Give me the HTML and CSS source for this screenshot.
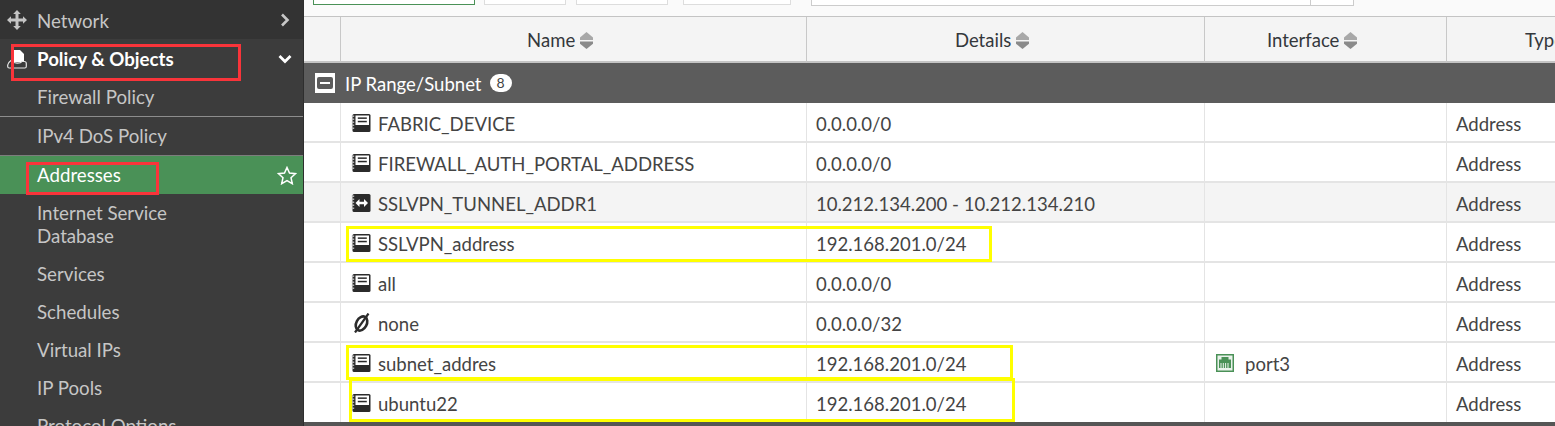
FILE: index.html
```html
<!DOCTYPE html>
<html lang="en">
<head>
<meta charset="utf-8">
<title>Addresses</title>
<link rel="stylesheet" href="styles.css">
</head>
<body>
<svg class="defs" width="0" height="0">
  <symbol id="book" viewBox="0 0 20 20">
    <rect x="1.500" y="1" width="18" height="18" rx="1.500" fill="#2b2b2b"/>
    <rect x="4.500" y="2.500" width="13.500" height="9.500" fill="#fff"/>
    <rect x="6.800" y="4.400" width="9" height="1.500" fill="#2b2b2b"/>
    <rect x="6.800" y="7.800" width="9" height="1.500" fill="#2b2b2b"/>
    <path d="M2 2.500v15" stroke="#b4b4b4" stroke-width="2.400" stroke-dasharray="1.500 1.500"/>
  </symbol>
  <symbol id="range" viewBox="0 0 20 20">
    <rect x="1.500" y="1" width="18" height="18" rx="1.500" fill="#2b2b2b"/>
    <path d="M4.500 10l4-4v2.700h4.500v-2.700l4 4-4 4v-2.700h-4.500v2.700z" fill="#fff"/>
    <path d="M2 2.500v15" stroke="#b4b4b4" stroke-width="2.400" stroke-dasharray="1.500 1.500"/>
  </symbol>
  <symbol id="sort" viewBox="0 0 13 17">
    <path d="M6.500 0l6.500 5.500v2.500h-13v-2.500z" fill="#a8a8a8"/>
    <path d="M0 9.500h13v2.300l-6.500 5.200-6.500-5.200z" fill="#8a8a8a"/>
  </symbol>
</svg>

<div class="app">
  <nav class="sidebar">
    <div class="nav-item nav-top">
      <svg class="nav-icon" width="20" height="20" viewBox="0 0 20 20"><path d="M10 0l3.800 4h-2.300v4.500h4.500v-2.300l4 3.800-4 3.800v-2.300h-4.500v4.500h2.300l-3.800 4-3.800-4h2.300v-4.500h-4.500v2.300l-4-3.800 4-3.800v2.300h4.500v-4.500h-2.300z" fill="#c4c4c4"/></svg>
      <span>Network</span>
      <svg class="chev" width="10" height="14" viewBox="0 0 10 14"><path d="M2 1.500l5.500 5.500-5.500 5.500" fill="none" stroke="#c8c8c8" stroke-width="2.600"/></svg>
    </div>
    <div class="nav-item nav-open">
      <svg class="nav-icon" width="20" height="20" viewBox="0 0 20 20"><path d="M6 1h7l4 4v8h-11z" fill="#fff"/><path d="M4 11.500c-1.500 1-3 2.500-3.300 4.500v1.500a1.500 1.500 0 0 0 1.500 1.500h15.600a1.500 1.500 0 0 0 1.500-1.500v-3a2 2 0 0 0-2-2h-2.500c-1 2-8 2.500-10.800-1z" fill="#3b3b3b" stroke="#e6e6e6" stroke-width="1.200"/></svg>
      <span>Policy &amp; Objects</span>
      <svg class="chev chev-down" width="14" height="10" viewBox="0 0 14 10"><path d="M1.500 2l5.500 5.500 5.500-5.500" fill="none" stroke="#fff" stroke-width="2.800"/></svg>
    </div>
    <div class="nav-sub nav-line">Firewall Policy</div>
    <div class="nav-sub">IPv4 DoS Policy</div>
    <div class="nav-sub nav-active">
      <span>Addresses</span>
      <svg class="star" width="20" height="19" viewBox="0 0 20 19"><path d="M10 1.500l2.500 5.600 6 .6-4.500 4 1.300 6-5.300-3.100-5.300 3.100 1.300-6-4.500-4 6-.6z" fill="none" stroke="#fff" stroke-width="1.500"/></svg>
    </div>
    <div class="nav-sub nav-wrap">Internet Service<br>Database</div>
    <div class="nav-sub">Services</div>
    <div class="nav-sub">Schedules</div>
    <div class="nav-sub">Virtual IPs</div>
    <div class="nav-sub">IP Pools</div>
    <div class="nav-sub">Protocol Options</div>
  </nav>

  <main class="main">
    <div class="toolbar">
      <div class="tool tool-create"></div>
      <div class="tool tool-a"></div>
      <div class="tool tool-b"></div>
      <div class="tool tool-c"></div>
      <div class="tool-search"><div class="search-end"></div></div>
    </div>

    <table class="grid">
      <colgroup>
        <col class="c-check"><col class="c-name"><col class="c-details"><col class="c-iface"><col class="c-type">
      </colgroup>
      <thead>
        <tr>
          <th></th>
          <th>Name <svg class="sort" width="13" height="17"><use href="#sort"/></svg></th>
          <th>Details <svg class="sort" width="13" height="17"><use href="#sort"/></svg></th>
          <th>Interface <svg class="sort" width="13" height="17"><use href="#sort"/></svg></th>
          <th>Type</th>
        </tr>
      </thead>
      <tbody>
        <tr class="group">
          <td colspan="5">
            <div class="group-label">
              <span class="minus"><i></i></span>
              <span>IP Range/Subnet</span>
              <span class="count">8</span>
            </div>
          </td>
        </tr>
        <tr>
          <td></td>
          <td><div class="cell"><svg class="ico" width="20" height="20"><use href="#book"/></svg>FABRIC_DEVICE</div></td>
          <td>0.0.0.0/0</td><td></td><td>Address</td>
        </tr>
        <tr>
          <td></td>
          <td><div class="cell"><svg class="ico" width="20" height="20"><use href="#book"/></svg>FIREWALL_AUTH_PORTAL_ADDRESS</div></td>
          <td>0.0.0.0/0</td><td></td><td>Address</td>
        </tr>
        <tr class="row-grey">
          <td></td>
          <td><div class="cell"><svg class="ico" width="20" height="20"><use href="#range"/></svg>SSLVPN_TUNNEL_ADDR1</div></td>
          <td>10.212.134.200 - 10.212.134.210</td><td></td><td>Address</td>
        </tr>
        <tr>
          <td></td>
          <td><div class="cell"><svg class="ico" width="20" height="20"><use href="#book"/></svg>SSLVPN_address</div></td>
          <td>192.168.201.0/24</td><td></td><td>Address</td>
        </tr>
        <tr>
          <td></td>
          <td><div class="cell"><svg class="ico" width="20" height="20"><use href="#book"/></svg>all</div></td>
          <td>0.0.0.0/0</td><td></td><td>Address</td>
        </tr>
        <tr>
          <td></td>
          <td><div class="cell"><svg class="ico" width="20" height="20" viewBox="0 0 20 20"><ellipse cx="10.500" cy="10.500" rx="5.200" ry="7.500" transform="rotate(28 10.500 10.500)" fill="none" stroke="#2b2b2b" stroke-width="2.600"/><path d="M4 19.500l13.500-19" stroke="#2b2b2b" stroke-width="2.200"/></svg>none</div></td>
          <td>0.0.0.0/32</td><td></td><td>Address</td>
        </tr>
        <tr>
          <td></td>
          <td><div class="cell"><svg class="ico" width="20" height="20"><use href="#book"/></svg>subnet_addres</div></td>
          <td>192.168.201.0/24</td>
          <td><div class="cell"><svg class="ico port" width="18" height="18" viewBox="0 0 18 18"><rect width="18" height="18" fill="#4a9157"/><rect x="1.500" y="1.500" width="15" height="15" fill="#e9f2eb"/><path d="M5.500 3h7v2.500h2.500v8.500h-12v-8.500h2.500z" fill="#4a9157"/><path d="M5 9v5M7.300 9v5M9.600 9v5M12 9v5" stroke="#fff" stroke-width=".9"/></svg>port3</div></td>
          <td>Address</td>
        </tr>
        <tr>
          <td></td>
          <td><div class="cell"><svg class="ico" width="20" height="20"><use href="#book"/></svg>ubuntu22</div></td>
          <td>192.168.201.0/24</td><td></td><td>Address</td>
        </tr>
      </tbody>
    </table>
    <div class="footbar"></div>
  </main>

  <!-- annotations drawn over the screenshot -->
  <div class="mark red mark-policy"></div>
  <div class="mark red mark-addr"></div>
  <div class="mark yellow mark-y1"></div>
  <div class="mark yellow mark-y2"></div>
  <div class="mark yellow mark-y3"></div>
</div>
</body>
</html>
```

FILE: styles.css
```css
html, body {
	margin: 0;
	padding: 0;
	height: 100%;
	overflow: hidden;
	background: #fff;
}
body {
	font-family: Lato, "Liberation Sans", Arial, sans-serif;
	font-size: 18.7px;
	color: #444;
}
.defs { position: absolute; }

.app {
	position: relative;
	display: flex;
	width: 1555px;
	height: 426px;
	overflow: hidden;
}

/* left menu */
.sidebar {
	flex: 0 0 303px;
	width: 303px;
	background: #3c3c3c;
	border-right: 1px solid #2e2e2e;
	color: #c6c6c6;
	box-sizing: content-box;
}
.nav-item {
	display: flex;
	align-items: center;
	padding-left: 7px;
	padding-right: 11px;
}
.nav-top {
	height: 39px;
	background: #333;
	padding-top: 1px;
	box-sizing: border-box;
}
.nav-top span { padding-top: 2px; }
.nav-open {
	height: 39px;
	color: #fff;
	font-weight: 700;
}
.nav-open span { padding-top: 1px; }
.nav-icon { flex: none; margin-right: 10px; }
.nav-item span { flex: 1; }
.chev { flex: none; margin-right: 2px; }
.chev-down { margin-right: 0; }
.nav-sub {
	display: flex;
	align-items: center;
	height: 38px;
	box-sizing: border-box;
	padding: 0 7px 0 37px;
}
.nav-line {
	height: 39px;
	border-bottom: 1px solid #8d8d8d;
}
.nav-active {
	height: 39px;
	background: #4a9157;
	color: #fff;
	justify-content: space-between;
	border-top: 1px solid #7d7d7d;
}
.star { margin-right: -1px; }
.nav-wrap {
	height: 61px;
	line-height: 23px;
}

/* content */
.main {
	flex: 1;
	min-width: 0;
	display: flex;
	flex-direction: column;
}
.toolbar {
	display: flex;
	height: 16px;
	flex: none;
	background: #fafafa;
	border-bottom: 1px solid #c4c4c4;
	padding-left: 9px;
}
.tool {
	height: 5px;
	background: #fff;
	border: 1px solid #ddd;
	border-top: 0;
	box-sizing: border-box;
	margin-right: 10px;
}
.tool-create { width: 162px; border-color: #4a9157; margin-right: 9px; }
.tool-a { width: 82px; }
.tool-b { width: 92px; margin-right: 15px; }
.tool-c { width: 108px; margin-right: 20px; }
.tool-search {
	width: 543px;
	height: 6px;
	background: #fff;
	border: 1px solid #ccc;
	border-top: 0;
	box-sizing: border-box;
	display: flex;
	justify-content: flex-end;
}
.search-end {
	width: 42px;
	border-left: 1px solid #ccc;
}

.grid {
	table-layout: fixed;
	border-collapse: separate;
	border-spacing: 0;
	width: 1365px;
	flex: none;
	font-size: 18.55px;
}
.c-check { width: 37px; }
.c-name { width: 466px; }
.c-details { width: 398px; }
.c-iface { width: 242px; }
.c-type { width: 222px; }

.grid th {
	height: 46px;
	padding: 2px 27px 0 0;
	box-sizing: border-box;
	background: #f4f4f4;
	border-right: 1px solid #c8c8c8;
	border-bottom: 2px solid #c4c4c4;
	font-weight: 400;
	color: #34383c;
	text-align: center;
	white-space: nowrap;
	overflow: hidden;
}
.grid th:last-child { border-right: 0; }
.sort { vertical-align: -2px; }

.grid td {
	height: 40px;
	padding: 4px 0 0 9px;
	box-sizing: border-box;
	border-right: 1px solid #e4e4e4;
	border-bottom: 2px solid #e4e4e4;
	white-space: nowrap;
	overflow: hidden;
}
.grid td:last-child { border-right: 0; }
.grid tr:last-child td {
	height: 39px;
	padding-top: 3px;
	border-bottom: 0;
}
.row-grey td { background: #f4f4f4; }

.grid .group td {
	height: 40px;
	padding: 1px 0 0 11px;
	background: #5c5c5c;
	border: 0;
	color: #fff;
}
.group-label {
	display: flex;
	align-items: center;
}
.minus {
	flex: none;
	display: flex;
	align-items: center;
	justify-content: center;
	width: 20px;
	height: 20px;
	background: #fff;
	margin-right: 10px;
	margin-top: -2px;
}
.minus i {
	display: block;
	width: 10px;
	height: 2px;
	background: #fff;
	border: 3px solid #5c5c5c;
	border-width: 5px 3px;
	border-radius: 2px;
}
.count {
	margin-left: 8px;
	margin-top: -2px;
	width: 22px;
	height: 18px;
	line-height: 18px;
	border-radius: 9px;
	background: #fff;
	color: #444;
	font-size: 14px;
	text-align: center;
}

.cell {
	display: flex;
	align-items: center;
}
.ico {
	flex: none;
	margin-right: 7px;
	margin-left: 1px;
	margin-top: -2px;
}
.port { margin-right: 11px; margin-left: 2px; }

.footbar {
	flex: 1;
	background: #555;
}

/* annotations */
.mark {
	position: absolute;
	box-sizing: border-box;
	border-style: solid;
	border-width: 3px;
}
.red { border-color: #f9343a; }
.yellow { border-color: #ffff00; }
.mark-policy { left: 11px; top: 44px; width: 230px; height: 37px; }
.mark-addr { left: 26px; top: 162px; width: 133px; height: 33px; }
.mark-y1 { left: 346px; top: 226px; width: 646px; height: 36px; }
.mark-y2 { left: 346px; top: 345px; width: 667px; height: 35px; }
.mark-y3 { left: 349px; top: 378px; width: 666px; height: 44px; }
```
